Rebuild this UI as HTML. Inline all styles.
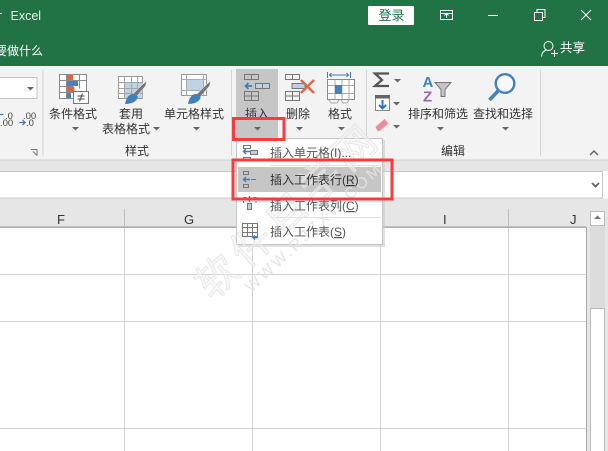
<!DOCTYPE html>
<html><head><meta charset="utf-8"><style>
html,body{margin:0;padding:0;width:608px;height:451px;overflow:hidden;background:#fff}
svg{position:absolute;left:0;top:0;display:block}
text{font-family:"Liberation Sans","Noto Sans CJK SC",sans-serif;font-size:12px;fill:#333}
.a{fill:#555}
</style></head><body>
<svg width="608" height="451" viewBox="0 0 608 451" xmlns="http://www.w3.org/2000/svg">
<defs>
<path id="d" d="M0 0h7l-3.500 3.500z" fill="#666"/>
</defs>
<!-- title -->
<rect width="608" height="66" fill="#217346"/>
<rect x="0" y="13" width="2" height="1" fill="#ddd"/>
<text x="10.500" y="20" style="font-size:12.500px;fill:#e8f1ec">Excel</text>
<text x="-5" y="55" style="fill:#fff;font-size:12px">要做什么</text>
<rect x="368" y="6" width="46" height="19" rx="1" fill="#fff"/>
<text x="378.500" y="20" style="fill:#217346;font-size:13px">登录</text>
<g fill="none" stroke="#fff">
<rect x="440.500" y="10.500" width="12" height="9"/><path d="M440 13.500h13M446.500 18v-4M444.500 15.500l2-2 2 2"/>
<path d="M488 15.500h10"/>
<rect x="534.500" y="12.500" width="8" height="8"/><path d="M537 12v-2.500h8v8h-2.500"/>
<path d="M581 10l10 10M591 10l-10 10"/>
<circle cx="548.500" cy="46" r="4.500"/><path d="M541.500 56.500c.5-4.500 3-6 5-6.500M551 53.500h7M554.500 50v7"/>
</g>
<text x="560" y="52" style="fill:#fff;font-size:12.500px">共享</text>
<!-- ribbon -->
<rect y="66" width="608" height="94" fill="#f3f3f3"/>
<rect y="160" width="608" height="11" fill="#e5e5e5"/>
<rect y="159.500" width="608" height="1" fill="#d2d2d2"/>
<rect x="-2" y="77.500" width="39" height="21" fill="#fff" stroke="#c6c6c6"/>
<use href="#d" x="27" y="87"/>
<rect x="42.500" y="70" width="1" height="86" fill="#d5d5d5"/>
<rect x="231" y="70" width="1" height="86" fill="#d5d5d5"/>
<rect x="366" y="70" width="1" height="86" fill="#d5d5d5"/>
<rect x="540" y="70" width="1" height="86" fill="#d5d5d5"/>
<!-- number format -->
<text x="5" y="119" style="font-size:9.500px;fill:#444">.0</text>
<text x="0" y="126" style="font-size:9.500px;fill:#444">.00</text>
<text x="23" y="119" style="font-size:9.500px;fill:#444">.00</text>
<text x="26" y="126" style="font-size:9.500px;fill:#444">.0</text>
<path d="M0 114.500h3.500M19.500 122.500h5.500M22.500 120l2.700 2.500-2.700 2.500" stroke="#3f7cb8" fill="none" stroke-width="1.200"/>
<path d="M31 149.500h6v6M33 151.500l4 4" stroke="#777" fill="none"/>
<!-- conditional format icon -->
<rect x="59" y="74" width="28" height="25" fill="#fff"/>
<g fill="none" stroke="#8a8a8a" stroke-width="1">
<path d="M59.500 74.500h27v24h-27zM59.500 80.500h27M59.500 86.500h14M59.500 92.500h14M66.500 74.500v24M79.500 74.500v14"/>
</g>
<rect x="67" y="75" width="6" height="5" fill="#e0653e"/>
<rect x="67" y="81" width="11" height="5" fill="#4a80bb"/>
<rect x="67" y="87" width="7.500" height="5" fill="#e0653e"/>
<rect x="67" y="93" width="4" height="5" fill="#4a80bb"/>
<rect x="73.500" y="91.500" width="15" height="12" fill="#fff" stroke="#777"/>
<path d="M77.500 96h7M77.500 99h7M82.500 93.500l-3 8" stroke="#444" fill="none"/>
<!-- table format -->
<rect x="118.500" y="76.500" width="24" height="22" fill="#fff" stroke="#999"/>
<rect x="125" y="83" width="17.500" height="15" fill="#c0d2e6"/>
<path d="M118.500 82.500h24M118.500 88.500h24M118.500 93.500h24M124.500 76.500v22M131.500 76.500v22M137.500 76.500v22" stroke="#a5a5a5" fill="none"/>
<path d="M133 94l10-10 4-3-1.500 5-9.500 11z" fill="#777" stroke="#f3f3f3" stroke-width=".5"/>
<path d="M125 104c1-6 4-10 8-10 3.500 0 5.500 2.500 4 5-2 3.500-7 5-12 5z" fill="#4080bd"/>
<!-- cell style -->
<rect x="181.500" y="74.500" width="25" height="21" fill="#fff" stroke="#999"/>
<rect x="187" y="79" width="16" height="11" fill="#c0d2e6"/>
<path d="M181.500 79.500h25M181.500 90.500h25M186.500 74.500v21M203.500 74.500v21" stroke="#aaa" fill="none"/>
<path d="M197 94l10-10 4-3-1.500 5-9.500 11z" fill="#777" stroke="#f3f3f3" stroke-width=".5"/>
<path d="M188 104c1-6 4-10 8-10 3.500 0 5.500 2.500 4 5-2 3.500-7 5-12 5z" fill="#4080bd"/>
<text x="49" y="118">条件格式</text>
<text x="119" y="118">套用</text>
<text x="102" y="133">表格格式</text>
<text x="164" y="118">单元格样式</text>
<text x="125" y="155">样式</text>
<use href="#d" x="72" y="127"/><use href="#d" x="153" y="127"/><use href="#d" x="193" y="127"/>
<!-- insert -->
<rect x="236" y="69" width="42" height="69" fill="#c6c6c6"/>
<g fill="none" stroke="#777">
<rect x="244.500" y="74.500" width="14" height="5"/><path d="M251.500 74.500v5"/>
<rect x="244.500" y="91.500" width="14" height="9"/><path d="M251.500 91.500v9M244.500 96h14"/>
</g>
<rect x="255.500" y="83.500" width="14" height="5" fill="#bcd0e6" stroke="#777"/><path d="M262.500 83.500v5" stroke="#777"/>
<path d="M252 86h-6M248.500 83l-3 3 3 3" fill="none" stroke="#3f7cb8" stroke-width="1.700"/>
<text x="245" y="118">插入</text>
<use href="#d" x="254" y="127"/>
<!-- delete -->
<g fill="none" stroke="#777">
<rect x="285.500" y="74.500" width="14" height="5"/><path d="M292.500 74.500v5"/>
<rect x="285.500" y="91.500" width="14" height="9"/><path d="M292.500 91.500v9M285.500 96h14"/>
</g>
<rect x="292" y="83.500" width="13" height="5" fill="#bcd0e6" stroke="#777"/>
<path d="M301 80l13 13M314 80l-13 13" stroke="#e0694a" stroke-width="2.500" fill="none"/>
<text x="286" y="118">删除</text>
<use href="#d" x="296" y="127"/>
<!-- format -->
<path d="M327.500 72v6M350.500 72v6M329 75h20" stroke="#3f7cb8" fill="none"/>
<path d="M331.500 73l-2 2 2 2M346.500 73l2 2-2 2" stroke="#3f7cb8" fill="none"/>
<rect x="327.500" y="79.500" width="27" height="20" fill="#fff" stroke="#888"/>
<path d="M327.500 85.500h27M327.500 93.500h27M335 79.500v20M342 79.500v20M349 79.500v20M329 100l2 3h6l2-3M341 100l2 3h4l2-3" stroke="#aaa" fill="none"/>
<rect x="335" y="85" width="7" height="9" fill="#4a80bb"/>
<text x="328" y="118">格式</text>
<use href="#d" x="338" y="127"/>
<!-- editing -->
<path d="M389 73.500h-14l7 6.500-7 6h14" fill="none" stroke="#555" stroke-width="2.300"/>
<use href="#d" x="394" y="79"/>
<rect x="375.500" y="95.500" width="14" height="15" fill="#fff" stroke="#888"/>
<rect x="375" y="95" width="15" height="3.500" fill="#666"/>
<path d="M382.500 100v8M379 105l3.500 3.500 3.500-3.500" fill="none" stroke="#2f73b8" stroke-width="2"/>
<use href="#d" x="393" y="102"/>
<path d="M375.500 127l9-8 4 4.500-9 7.500h-2z" fill="#ec8c9a"/>
<use href="#d" x="393" y="125"/>
<text x="422.500" y="87" style="font:bold 15px 'Liberation Sans';fill:#3f80c4">A</text>
<text x="423" y="101.500" style="font:bold 15px 'Liberation Sans';fill:#9b62b5">Z</text>
<path d="M435 82.500h16l-6 7v7h-4v-7z" fill="#c4c4c4" stroke="#777"/>
<circle cx="505" cy="83.500" r="9.300" fill="#f7f9fb" stroke="#3f80c4" stroke-width="2.400"/>
<path d="M498 91l-8.500 9" stroke="#4a80bb" stroke-width="3.600" fill="none"/>
<text x="408" y="118">排序和筛选</text>
<text x="473" y="118">查找和选择</text>
<use href="#d" x="437" y="127"/><use href="#d" x="502" y="127"/>
<text x="441" y="155">编辑</text>
<path d="M590 155l4-4 4 4" fill="none" stroke="#666" stroke-width="1.500"/>
<!-- formula bar -->
<rect x="-2" y="171.500" width="604.500" height="26.500" fill="#fff" stroke="#c9c9c9"/>
<path d="M592 183l3.500 3.500 3.500-3.500" fill="none" stroke="#666" stroke-width="1.800"/>
<!-- header -->
<rect y="198.500" width="608" height="252.500" fill="#e6e6e6"/>
<rect x="0" y="227" width="586" height="224" fill="#fff"/>
<rect x="0" y="226.500" width="586" height="1.300" fill="#9a9a9a"/>
<rect x="586" y="227" width="1" height="224" fill="#a8a8a8"/>
<g fill="#bdbdbd">
<rect x="124" y="209" width="1" height="18"/><rect x="252" y="209" width="1" height="18"/><rect x="380" y="209" width="1" height="18"/><rect x="508" y="209" width="1" height="18"/>
</g>
<g fill="#d4d4d4">
<rect x="124" y="228" width="1" height="223"/><rect x="252" y="228" width="1" height="223"/><rect x="380" y="228" width="1" height="223"/><rect x="508" y="228" width="1" height="223"/>
<rect x="0" y="274" width="586" height="1"/><rect x="0" y="321" width="586" height="1"/><rect x="0" y="428" width="586" height="1"/>
</g>
<text x="57" y="224" style="font-size:13px">F</text>
<text x="184" y="224" style="font-size:13px">G</text>
<text x="443" y="224" style="font-size:13px">I</text>
<text x="570" y="224" style="font-size:13px">J</text>
<!-- scrollbar -->
<rect x="590" y="211" width="15" height="240" fill="#dcdcdc"/>
<rect x="590.500" y="211.500" width="14" height="14" fill="#fff" stroke="#bbb"/>
<path d="M594 219h7l-3.500-3.500z" fill="#777"/>
<rect x="590.500" y="308.500" width="14" height="143" fill="#fff" stroke="#bbb"/>
<!-- menu -->
<rect x="238" y="140" width="147" height="107" fill="#ccc" opacity=".6"/>
<rect x="236.500" y="138.500" width="146" height="106" fill="#fff" stroke="#c6c6c6"/>
<rect x="238" y="167" width="143" height="25" fill="#c6c6c6"/>
<rect x="270" y="165" width="111" height="1" fill="#e1e1e1"/>
<rect x="270" y="217" width="111" height="1" fill="#e1e1e1"/>
<!-- watermark below menu text -->
<g transform="translate(212 301) rotate(-43)">
<text x="0" y="0" style="font-size:41px;fill:#f2f2f2;stroke:#dedede;stroke-width:.8;letter-spacing:6px;fill-opacity:.55;stroke-opacity:.8">软件自学网</text>
<text x="34" y="21" style="font-size:16px;fill:#e2e2e2;letter-spacing:2.800px;fill-opacity:.9">WWW.RJZXW.COM</text>
</g>
<text x="270" y="157" class="a">插入单元格(I)...</text>
<text x="270" y="184" style="fill:#333">插入工作表行(<tspan text-decoration="underline">R</tspan>)</text>
<text x="270" y="210" class="a">插入工作表列(<tspan text-decoration="underline">C</tspan>)</text>
<text x="270" y="236" class="a">插入工作表(<tspan text-decoration="underline">S</tspan>)</text>
<!-- menu icons -->
<g fill="none" stroke="#777">
<rect x="243.500" y="145.500" width="7" height="3"/><rect x="243.500" y="157.500" width="7" height="3"/>
<rect x="250.500" y="150.500" width="7" height="4" fill="#bcd0e6"/>
<rect x="243.500" y="171.500" width="5" height="3"/><rect x="243.500" y="184.500" width="5" height="3"/>
<path d="M251 179.500h5"/>
<path d="M243.500 197.500h3M253.500 197.500h3M243.500 201v2M256 201v2"/>
<rect x="247.500" y="203.500" width="4" height="6" fill="#bcd0e6"/>
<rect x="242.500" y="223.500" width="15" height="13" fill="#fff"/>
<path d="M242.500 227.500h15M242.500 232.500h15M247.500 223.500v13M252.500 223.500v13"/>
</g>
<path d="M250 151.500h-6M246 149l-2.500 2.500 2.500 2.500M250 179.500h-6M246 177l-2.500 2.500 2.500 2.500M258 237.500h-5M255 235.500l-2 2 2 2" fill="none" stroke="#3f7cb8" stroke-width="1.400"/>
<path d="M249.500 196v6" stroke="#3f7cb8" stroke-width="1.400"/>
<!-- red boxes -->
<rect x="233.500" y="118.500" width="50.500" height="21" fill="none" stroke="#fb3a3a" stroke-width="3"/>
<rect x="233" y="160" width="159" height="39" fill="none" stroke="#fb3a3a" stroke-width="3"/>
</svg>
</body></html>
